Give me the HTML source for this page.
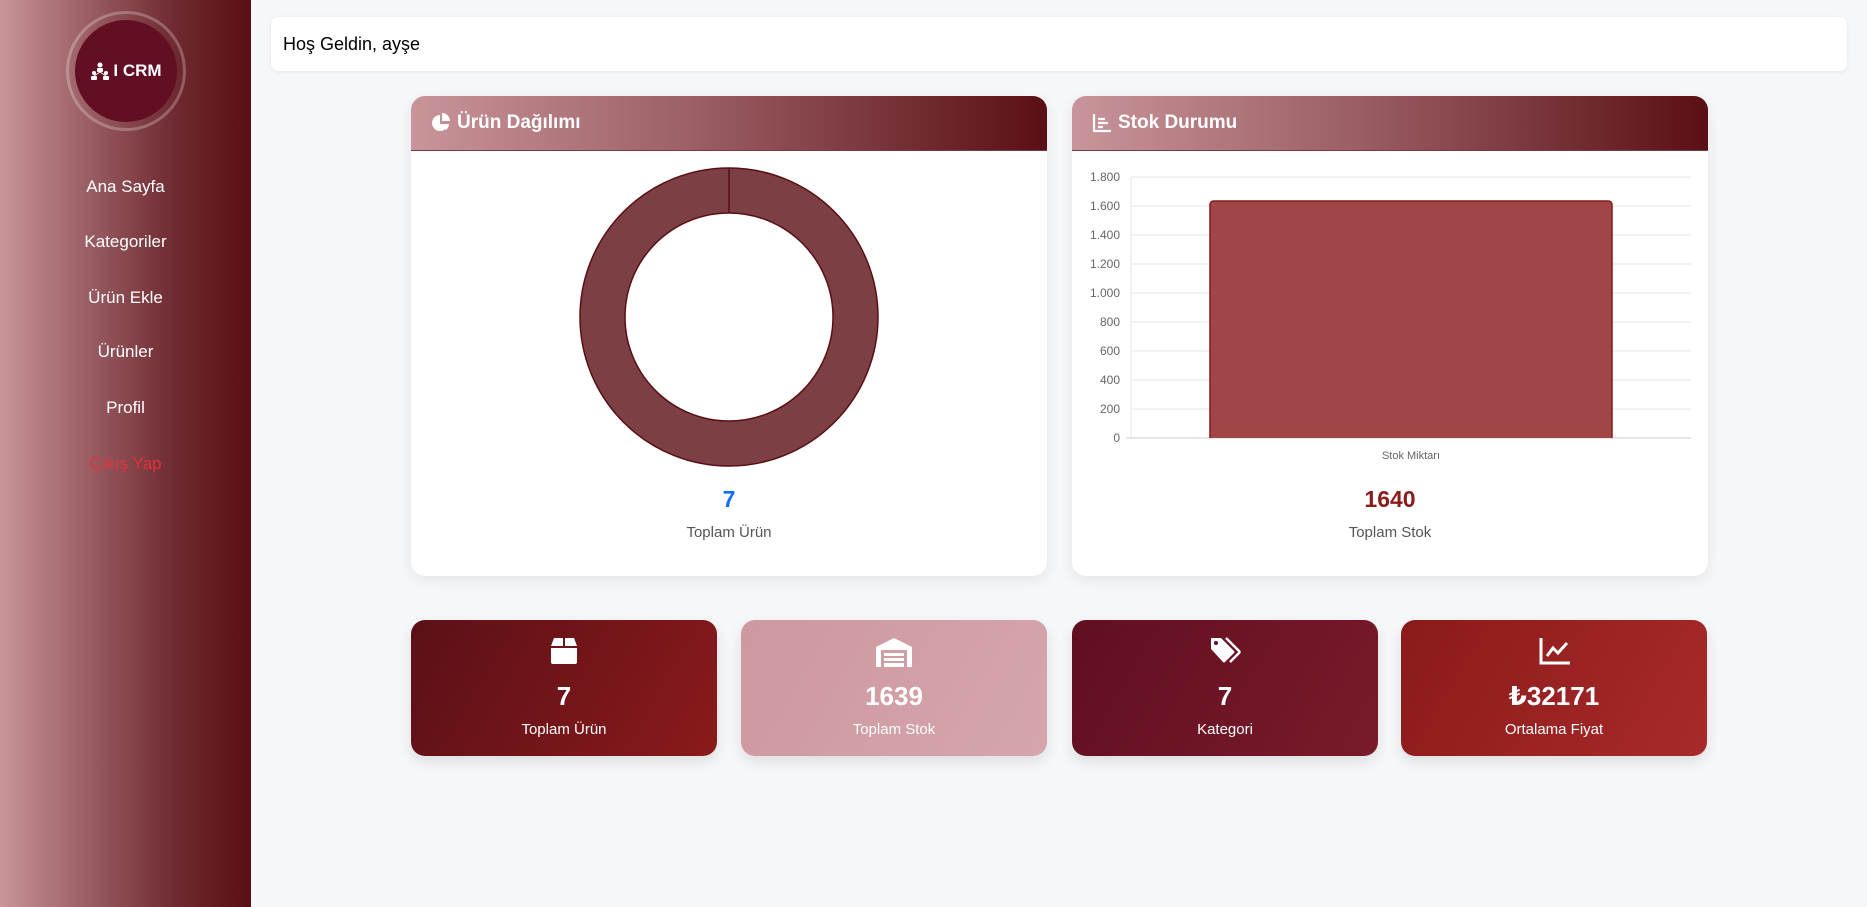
<!DOCTYPE html>
<html><head><meta charset="utf-8"><style>
*{box-sizing:border-box;margin:0;padding:0}
body{width:1867px;height:907px;background:#f6f7f9;font-family:"Liberation Sans","DejaVu Sans",sans-serif;position:relative;overflow:hidden}
.side{position:absolute;left:0;top:0;width:251px;height:907px;background:linear-gradient(90deg,#c9959a,#9a5e64 35%,#6e2a30 70%,#5a0f14)}
.logo{position:absolute;left:66px;top:11px;width:120px;height:120px;border-radius:50%;border:3px solid rgba(255,255,255,.25);}
.logo .in{position:absolute;left:6px;top:6px;width:102px;height:102px;border-radius:50%;background:#620f24;color:#fff;font-weight:bold;font-size:17px;display:flex;align-items:center;justify-content:center;gap:3px}
.nav{position:absolute;left:0;width:251px;text-align:center;color:#fff;font-size:17px}
.top{position:absolute;left:271px;top:17px;width:1576px;height:54px;background:#fff;border-radius:7px;box-shadow:0 1px 4px rgba(0,0,0,.08);font-size:18px;padding:18px 12px;line-height:1}
.card{position:absolute;top:96px;width:636px;height:480px;background:#fff;border-radius:14px;box-shadow:0 4px 14px rgba(0,0,0,.08);overflow:hidden}
.ch{height:55px;background:linear-gradient(90deg,#c9959a,#9a5e64 45%,#5a0f14);color:#fff;font-size:19px;font-weight:bold;display:flex;align-items:center;padding-left:20px;gap:6px;border-bottom:1px solid #7a3b40}
.big{position:absolute;width:100%;text-align:center;top:390px;font-size:23px;font-weight:bold}
.lbl{position:absolute;width:100%;text-align:center;top:428px;font-size:15px;color:#555}
.stat{position:absolute;top:620px;width:306px;height:136px;border-radius:14px;color:#fff;text-align:center;box-shadow:0 6px 14px rgba(0,0,0,.1)}
.stat svg{position:absolute;left:138px;top:17px}
.stat .n{position:absolute;width:100%;font-size:26px;font-weight:bold;top:61px}
.stat .l{position:absolute;width:100%;top:101px;font-size:15px}
</style></head><body>
<div class="side">
 <div class="logo"><div class="in"><svg width="20" height="18" viewBox="0 0 20 18" fill="#fff"><circle cx="10" cy="3" r="2.5"/><rect x="7" y="6" width="6" height="4" rx="1"/><circle cx="4" cy="11" r="2"/><rect x="1" y="14" width="6" height="4" rx="1"/><circle cx="16" cy="11" r="2"/><rect x="13" y="14" width="6" height="4" rx="1"/><path d="M10 10 L4 14 M10 10 L16 14" stroke="#fff" stroke-width="1"/></svg>I CRM</div></div>
 <div class="nav" style="top:177px">Ana Sayfa</div>
 <div class="nav" style="top:232px">Kategoriler</div>
 <div class="nav" style="top:288px">Ürün Ekle</div>
 <div class="nav" style="top:342px">Ürünler</div>
 <div class="nav" style="top:398px">Profil</div>
 <div class="nav" style="top:454px;color:#e0323c">Çıkış Yap</div>
</div>
<div class="top">Hoş Geldin, ayşe</div>

<div class="card" style="left:411px">
 <div class="ch"><svg width="20" height="20" viewBox="0 0 20 20" fill="#fff"><path d="M9 2 A8 8 0 1 0 17 11 L9 11 Z"/><path d="M11 0 A8 8 0 0 1 19 8 L11 8 Z"/><path d="M11 11 L18 11 A8 8 0 0 1 15 17 Z"/></svg>Ürün Dağılımı</div>
 <svg style="position:absolute;left:0;top:0" width="636" height="400"><circle cx="318" cy="221" r="126.5" fill="none" stroke="#7b3f44" stroke-width="45"/><circle cx="318" cy="221" r="149" fill="none" stroke="#5a0f14" stroke-width="1.5"/><circle cx="318" cy="221" r="104" fill="none" stroke="#5a0f14" stroke-width="1.5"/><line x1="318" y1="72" x2="318" y2="117" stroke="#5a0f14" stroke-width="1.5"/></svg>
 <div class="big" style="color:#0d6efd">7</div>
 <div class="lbl">Toplam Ürün</div>
</div>

<div class="card" style="left:1072px">
 <div class="ch"><svg width="20" height="20" viewBox="0 0 20 20" fill="none" stroke="#fff" stroke-width="2.2"><path d="M2 1 V18 H19"/><path d="M6 6 H13 M6 10 H16 M6 14 H11"/></svg>Stok Durumu</div>
 <svg style="position:absolute;left:0;top:0;font-family:'Liberation Sans',sans-serif" width="636" height="380" font-size="12" fill="#666">
  <g stroke="#e5e5e5" stroke-width="1">
   <line x1="59" y1="81" x2="619" y2="81"/><line x1="59" y1="110" x2="619" y2="110"/><line x1="59" y1="139" x2="619" y2="139"/><line x1="59" y1="168" x2="619" y2="168"/><line x1="59" y1="197" x2="619" y2="197"/><line x1="59" y1="226" x2="619" y2="226"/><line x1="59" y1="255" x2="619" y2="255"/><line x1="59" y1="284" x2="619" y2="284"/><line x1="59" y1="313" x2="619" y2="313"/><line x1="59" y1="81" x2="59" y2="342"/>
  </g>
  <line x1="54" y1="342" x2="619" y2="342" stroke="#ccc"/>
  <g text-anchor="end"><text x="48" y="85">1.800</text><text x="48" y="114">1.600</text><text x="48" y="143">1.400</text><text x="48" y="172">1.200</text><text x="48" y="201">1.000</text><text x="48" y="230">800</text><text x="48" y="259">600</text><text x="48" y="288">400</text><text x="48" y="317">200</text><text x="48" y="346">0</text></g>
  <path d="M138 342 V109 Q138 105 142 105 H536 Q540 105 540 109 V342" fill="#a04648" stroke="#8b1a1a" stroke-width="1.5"/>
  <text x="339" y="363" text-anchor="middle" font-size="11">Stok Miktarı</text>
 </svg>
 <div class="big" style="color:#8b1a1a">1640</div>
 <div class="lbl">Toplam Stok</div>
</div>

<div class="stat" style="left:411px;background:linear-gradient(120deg,#5a1018,#8a1a1a)">
 <svg width="30" height="28" viewBox="0 0 30 28" fill="#fff"><path d="M2 9 L5 1 H14 V9 Z M16 1 H25 L28 9 H16 Z M2 11 H28 V25 Q28 27 26 27 H4 Q2 27 2 25 Z"/></svg>
 <div class="n">7</div><div class="l">Toplam Ürün</div></div>
<div class="stat" style="left:741px;background:linear-gradient(120deg,#cd989e,#d6a5ac)">
 <svg width="40" height="30" viewBox="0 0 40 30" fill="#fff" style="left:133px"><path d="M2 10 L20 1 L38 10 V30 H33 V13 H7 V30 H2 Z"/><rect x="10" y="16" width="20" height="3"/><rect x="10" y="21" width="20" height="3"/><rect x="10" y="26" width="20" height="4"/></svg>
 <div class="n">1639</div><div class="l">Toplam Stok</div></div>
<div class="stat" style="left:1072px;background:linear-gradient(120deg,#600f20,#7a1a2a)">
 <svg width="34" height="30" viewBox="0 0 34 30" fill="#fff"><path d="M1 2 Q1 1 2 1 H11 L24 14 Q25 15 24 16 L15 25 Q14 26 13 25 L1 12 Z" /><circle cx="6" cy="6" r="2" fill="#660f22"/><path d="M16 1 L29 14 Q30 15 29 16 L20 25" fill="none" stroke="#fff" stroke-width="2.4"/></svg>
 <div class="n">7</div><div class="l">Kategori</div></div>
<div class="stat" style="left:1401px;background:linear-gradient(120deg,#8b1a1a,#a82a2a)">
 <svg width="32" height="28" viewBox="0 0 32 28" fill="none" stroke="#fff" stroke-width="3"><path d="M2 1 V26 H31"/><path d="M8 19 L14 11 L19 16 L28 6"/></svg>
 <div class="n">₺32171</div><div class="l">Ortalama Fiyat</div></div>
</body></html>
